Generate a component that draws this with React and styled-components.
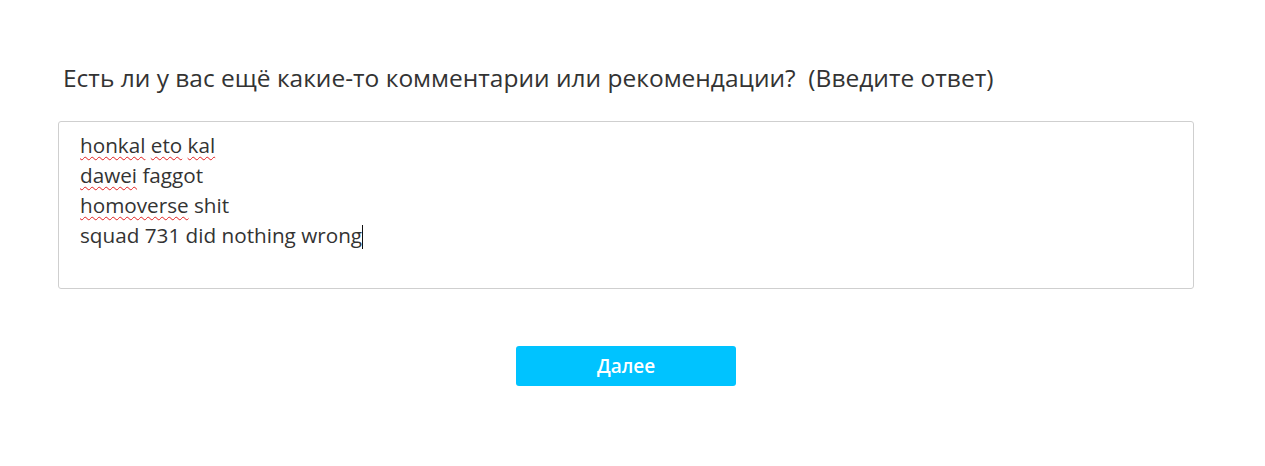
import React from "react";
import styled, { createGlobalStyle } from "styled-components";

const Global = createGlobalStyle`
  html, body { margin: 0; padding: 0; background: #fff; }
  body { font-family: "Open Sans", "Noto Sans", sans-serif; color: #333; }
`;

const Page = styled.div`
  padding: 62px 71px 0 58px;
  display: flex;
  flex-direction: column;
`;

const Question = styled.h2`
  margin: 0 0 27px 5px;
  font-weight: 400;
  font-size: 24.5px;
  line-height: 32px;
  color: #333;
  white-space: pre;
`;

const Answer = styled.div`
  box-sizing: border-box;
  width: 1136px;
  height: 168px;
  border: 1px solid #cfcfcf;
  border-radius: 3px;
  padding: 8px 21px;
  font-size: 20.7px;
  line-height: 30px;
  color: #333;
`;

const Line = styled.div`
  white-space: pre;
`;

const Misspelled = styled.span`
  text-decoration: underline wavy #e02020;
  text-decoration-thickness: 1px;
  text-underline-offset: 3px;
`;

const Caret = styled.span`
  display: inline-block;
  width: 1px;
  height: 24px;
  background: #111;
  vertical-align: -6px;
`;

const Footer = styled.div`
  display: flex;
  justify-content: center;
  width: 1136px;
  padding-top: 57px;
`;

const NextButton = styled.button`
  width: 220px;
  height: 40px;
  border: none;
  border-radius: 3px;
  background: #00c3ff;
  color: #fff;
  font-family: "Open Sans", "Noto Sans", sans-serif;
  font-weight: 600;
  font-size: 19px;
  line-height: 38px;
  cursor: pointer;
  padding: 0;
`;

export default function App() {
  return (
    <>
      <Global />
      <Page>
        <Question>{"Есть ли у вас ещё какие-то комментарии или рекомендации?  (Введите ответ)"}</Question>
        <Answer>
          <Line>
            <Misspelled>honkal</Misspelled> <Misspelled>eto</Misspelled> <Misspelled>kal</Misspelled>
          </Line>
          <Line>
            <Misspelled>dawei</Misspelled> faggot
          </Line>
          <Line>
            <Misspelled>homoverse</Misspelled> shit
          </Line>
          <Line>
            squad 731 did nothing wrong<Caret />
          </Line>
        </Answer>
        <Footer>
          <NextButton>Далее</NextButton>
        </Footer>
      </Page>
    </>
  );
}
